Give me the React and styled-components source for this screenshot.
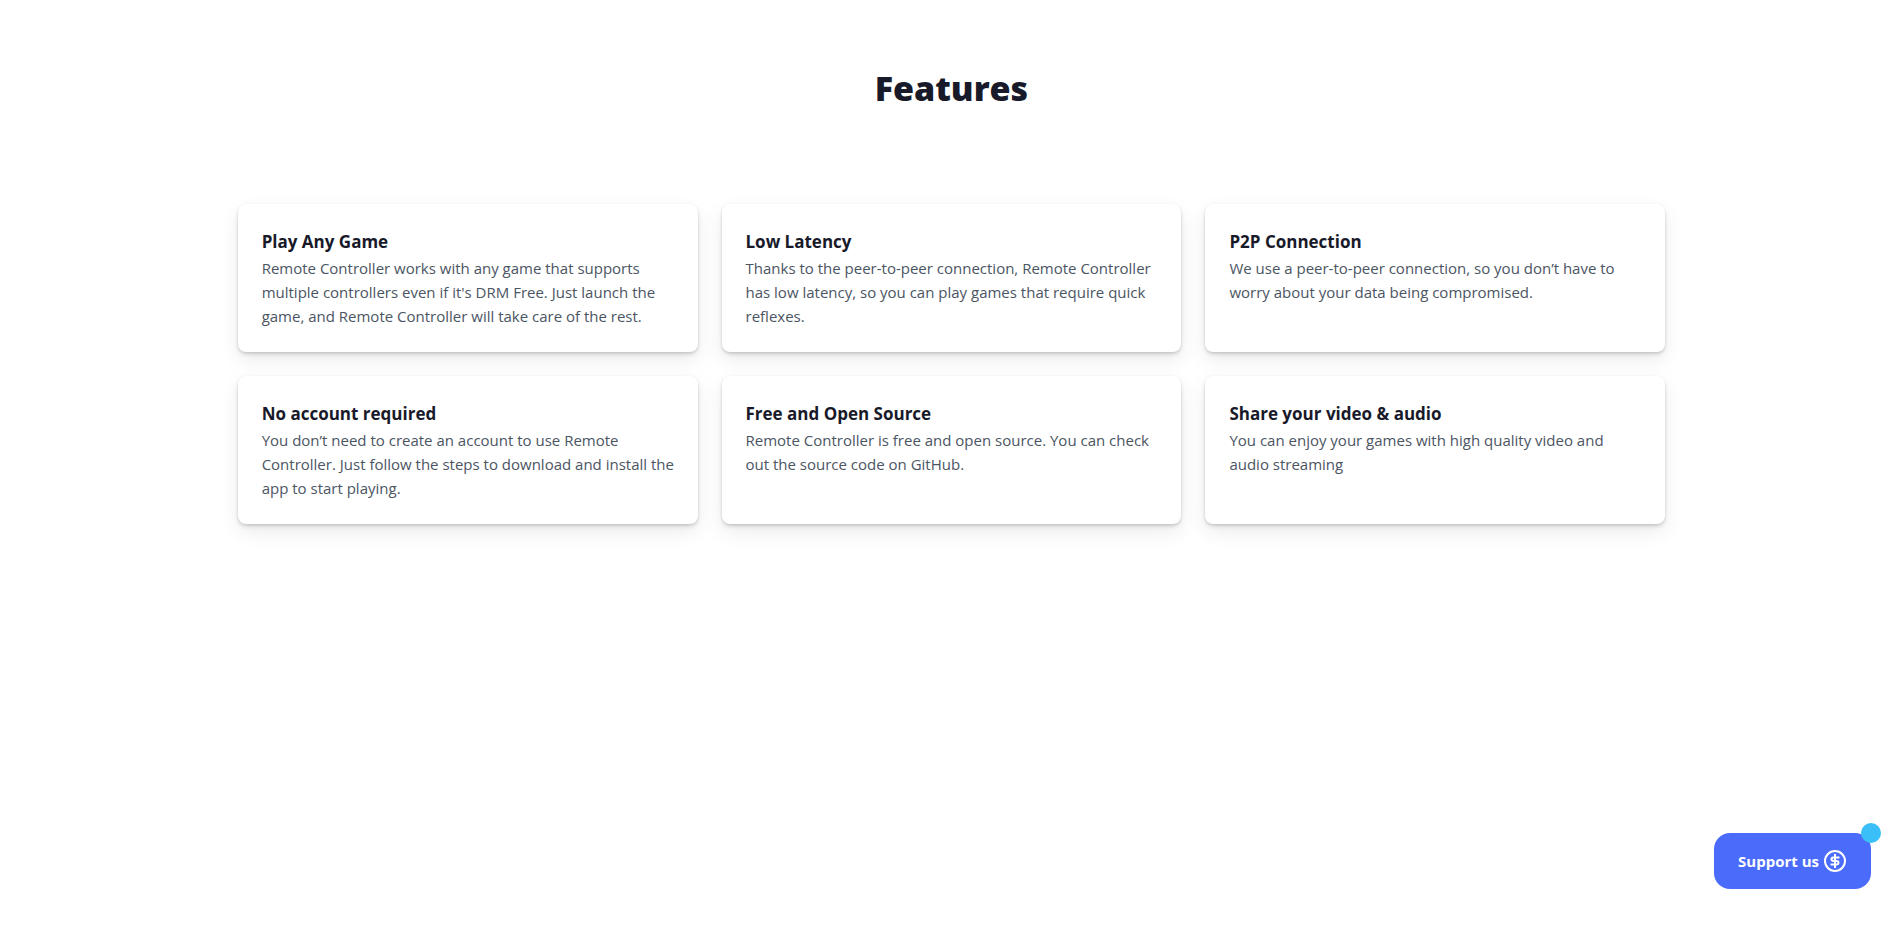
import React from "react";
import styled, { createGlobalStyle } from "styled-components";

const GlobalStyle = createGlobalStyle`
  * {
    box-sizing: border-box;
  }
  body {
    margin: 0;
    background: #ffffff;
    color: #181a2a;
    font-family: 'Open Sans', 'Noto Sans', sans-serif;
  }
`;

const Section = styled.section`
  padding: 64px 12.4% 64px 12.5%;
`;

const Heading = styled.h2`
  margin: 0 0 92px;
  font-size: 34px;
  line-height: 48px;
  font-weight: 800;
  text-align: center;
`;

const Grid = styled.div`
  display: grid;
  grid-template-columns: repeat(3, 1fr);
  gap: 24px;
`;

const Card = styled.article`
  padding: 24px 16px 24px 24px;
  background: #ffffff;
  border-radius: 8px;
  box-shadow: 0 1px 3px rgba(0, 0, 0, 0.12), 0 3px 5px -1px rgba(0, 0, 0, 0.12), 0 8px 20px rgba(0, 0, 0, 0.08);
`;

const CardTitle = styled.h3`
  margin: 0;
  font-size: 17px;
  line-height: 28px;
  font-weight: 700;
`;

const CardText = styled.p`
  margin: 0;
  font-size: 15px;
  line-height: 24px;
  font-weight: 400;
  color: #4b5563;
  white-space: pre-line;
`;

const SupportButton = styled.button`
  position: fixed;
  right: 30px;
  bottom: 40px;
  display: flex;
  align-items: center;
  gap: 4px;
  height: 56px;
  padding: 0 24px;
  border: none;
  border-radius: 16px;
  background: #4b6bfb;
  color: #ffffff;
  font-family: inherit;
  font-size: 15px;
  line-height: 24px;
  font-weight: 700;
  white-space: nowrap;
  cursor: pointer;
`;

const Dot = styled.span`
  position: absolute;
  top: -10px;
  right: -10px;
  width: 20px;
  height: 20px;
  border-radius: 50%;
  background: #3abff8;
`;

const features = [
  {
    title: "Play Any Game",
    text: "Remote Controller works with any game that supports multiple controllers even if it's DRM Free. Just launch the game, and Remote Controller will take care of the rest.",
  },
  {
    title: "Low Latency",
    text: "Thanks to the peer-to-peer connection, Remote Controller has low latency, so you can play games that require quick reflexes.",
  },
  {
    title: "P2P Connection",
    text: "We use a peer-to-peer connection, so you don’t have to worry about your data being compromised.",
  },
  {
    title: "No account required",
    text: "You don’t need to create an account to use Remote Controller. Just follow the steps to download and install the app to start playing.",
  },
  {
    title: "Free and Open Source",
    text: "Remote Controller is free and open source. You can check out the source code on GitHub.",
  },
  {
    title: "Share your video & audio",
    text: "You can enjoy your games with high quality video and\naudio streaming",
  },
];

const DollarIcon = () => (
  <svg width="24" height="24" viewBox="0 0 24 24" fill="none" stroke="currentColor" strokeWidth="2" aria-hidden="true">
    <circle cx="12" cy="12" r="10" />
    <path d="M16.5 8.5h-6.25a1.75 1.75 0 0 0 0 3.5h3.5a1.75 1.75 0 0 1 0 3.5H7.5M12 5v14" />
  </svg>
);

const App = () => {
  return (
    <>
      <GlobalStyle />
      <Section>
        <Heading>Features</Heading>
        <Grid>
          {features.map(({ title, text }) => (
            <Card key={title}>
              <CardTitle>{title}</CardTitle>
              <CardText>{text}</CardText>
            </Card>
          ))}
        </Grid>
      </Section>
      <SupportButton type="button">
        Support us
        <DollarIcon />
        <Dot />
      </SupportButton>
    </>
  );
};

export default App;
